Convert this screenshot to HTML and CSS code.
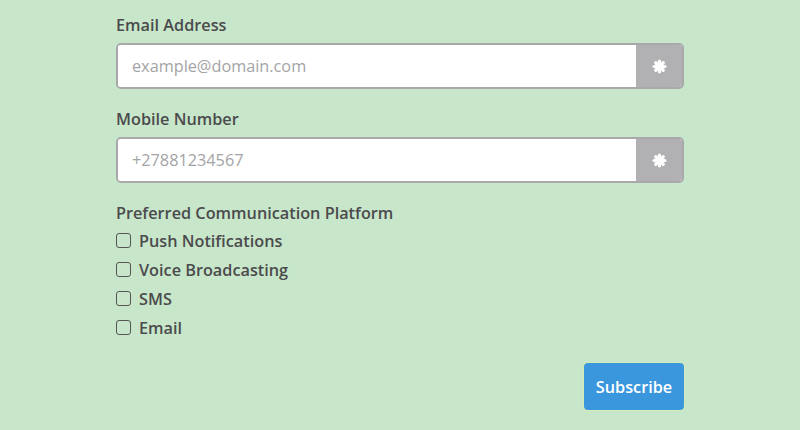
FILE: index.html
```html
<!DOCTYPE html>
<html>
<head>
<meta charset="utf-8">
<link rel="stylesheet" href="styles.css">
</head>
<body>
<form class="form">
  <label class="label">Email Address</label>
  <div class="group">
    <input class="input" type="text" placeholder="example@domain.com">
    <span class="addon"><svg width="15" height="15" viewBox="0 0 14 14"><g stroke="#fff" stroke-width="3" stroke-linecap="round"><line x1="7" y1="2" x2="7" y2="12"/><line x1="2" y1="7" x2="12" y2="7"/><line x1="3.5" y1="3.5" x2="10.5" y2="10.5"/><line x1="10.5" y1="3.5" x2="3.5" y2="10.5"/></g></svg></span>
  </div>
  <label class="label">Mobile Number</label>
  <div class="group">
    <input class="input" type="text" placeholder="+27881234567">
    <span class="addon"><svg width="15" height="15" viewBox="0 0 14 14"><g stroke="#fff" stroke-width="3" stroke-linecap="round"><line x1="7" y1="2" x2="7" y2="12"/><line x1="2" y1="7" x2="12" y2="7"/><line x1="3.5" y1="3.5" x2="10.5" y2="10.5"/><line x1="10.5" y1="3.5" x2="3.5" y2="10.5"/></g></svg></span>
  </div>
  <label class="label">Preferred Communication Platform</label>
  <div class="checks">
    <label class="check"><span class="box"></span>Push Notifications</label>
    <label class="check"><span class="box"></span>Voice Broadcasting</label>
    <label class="check"><span class="box"></span>SMS</label>
    <label class="check"><span class="box"></span>Email</label>
  </div>
  <div class="actions">
    <button class="btn" type="button">Subscribe</button>
  </div>
</form>
</body>
</html>
```
FILE: styles.css
```css
html, body {
  margin: 0;
  padding: 0;
  background: #c8e6c9;
  height: 100%;
}
body {
  font-family: "Open Sans", "Liberation Sans", sans-serif;
  color: #4b4b4d;
}
.form {
  width: 568px;
  margin: 0 auto;
  padding-top: 13px;
  display: flex;
  flex-direction: column;
}
.label {
  display: block;
  font-size: 16.25px;
  font-weight: 600;
  line-height: 24px;
  margin-bottom: 6px;
}
.group {
  display: flex;
  height: 46px;
  box-sizing: border-box;
  border: 2px solid #a9a9ac;
  border-radius: 5px;
  overflow: hidden;
  background: #fff;
  margin-bottom: 18px;
}
.input {
  flex: 1;
  border: 0;
  outline: none;
  padding: 0 14px;
  font-family: "Open Sans", "Liberation Sans", sans-serif;
  font-size: 16.25px;
  color: #444;
  background: #fff;
  min-width: 0;
}
.input::placeholder {
  color: #a4a4a6;
}
.addon {
  width: 46px;
  background: #b1b1b4;
  display: flex;
  align-items: center;
  justify-content: center;
}
.checks {
  display: flex;
  flex-direction: column;
  margin-top: -5px;
}
.check {
  display: flex;
  align-items: center;
  height: 29px;
  font-size: 16.25px;
  font-weight: 600;
}
.box {
  width: 15px;
  height: 15px;
  box-sizing: border-box;
  border: 1.5px solid #555;
  border-radius: 3px;
  background: transparent;
  margin-right: 8px;
}
.actions {
  display: flex;
  justify-content: flex-end;
  margin-top: 21px;
}
.btn {
  width: 100px;
  height: 47px;
  background: #3a97dd;
  color: #fff;
  border: 0;
  border-radius: 4px;
  font-family: "Open Sans", "Liberation Sans", sans-serif;
  font-size: 16.25px;
  font-weight: 600;
  box-shadow: 0 0 0 1px #d4ecb8;
}
```
